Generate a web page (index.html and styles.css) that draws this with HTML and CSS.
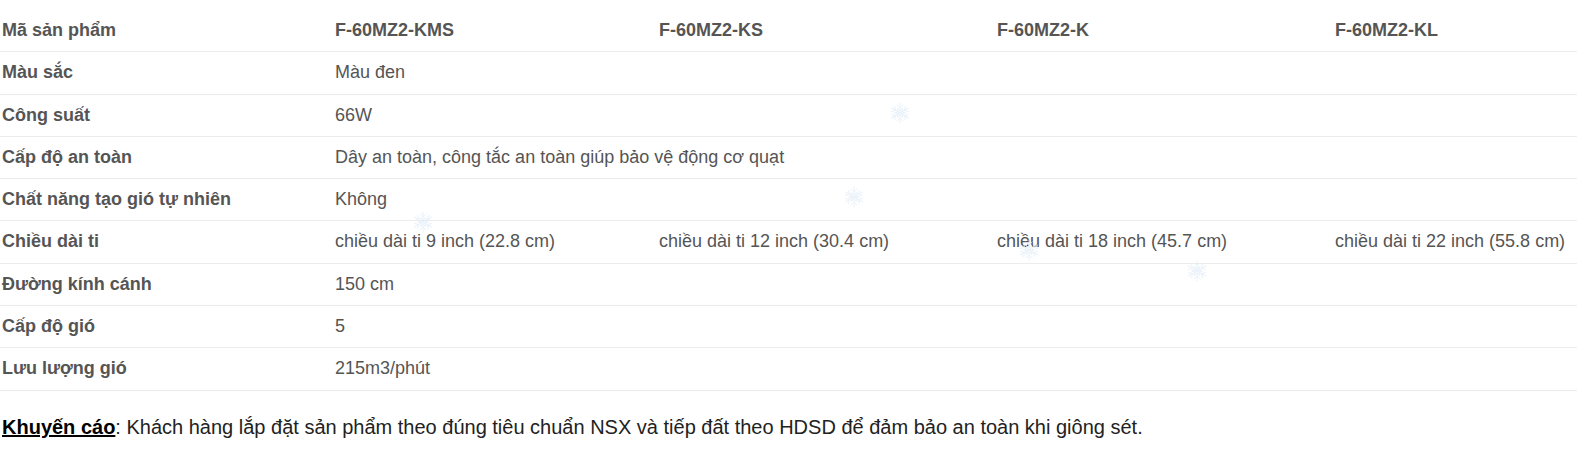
FILE: index.html
```html
<!DOCTYPE html>
<html lang="vi">
<head>
    <meta charset="UTF-8">
    <meta name="viewport" content="width=device-width, initial-scale=1.0">
    <title>Thông số kỹ thuật</title>
    <link rel="stylesheet" href="styles.css">
</head>
<body>
    <!-- Bảng thông số -->
    <table class="spec-table">
        <colgroup>
            <col class="col-label">
            <col class="col-a">
            <col class="col-b">
            <col class="col-c">
            <col>
        </colgroup>
        <tr class="head-row">
            <td class="label">Mã sản phẩm</td>
            <td>F-60MZ2-KMS</td>
            <td>F-60MZ2-KS</td>
            <td>F-60MZ2-K</td>
            <td>F-60MZ2-KL</td>
        </tr>
        <tr>
            <td class="label">Màu sắc</td>
            <td colspan="4">Màu đen</td>
        </tr>
        <tr>
            <td class="label">Công suất</td>
            <td colspan="4">66W</td>
        </tr>
        <tr>
            <td class="label">Cấp độ an toàn</td>
            <td colspan="4">Dây an toàn, công tắc an toàn giúp bảo vệ động cơ quạt</td>
        </tr>
        <tr>
            <td class="label">Chất năng tạo gió tự nhiên</td>
            <td colspan="4">Không</td>
        </tr>
        <tr>
            <td class="label">Chiều dài ti</td>
            <td>chiều dài ti 9 inch (22.8 cm)</td>
            <td>chiều dài ti 12 inch (30.4 cm)</td>
            <td>chiều dài ti 18 inch (45.7 cm)</td>
            <td>chiều dài ti 22 inch (55.8 cm)</td>
        </tr>
        <tr>
            <td class="label">Đường kính cánh</td>
            <td colspan="4">150 cm</td>
        </tr>
        <tr>
            <td class="label">Cấp độ gió</td>
            <td colspan="4">5</td>
        </tr>
        <tr>
            <td class="label">Lưu lượng gió</td>
            <td colspan="4">215m3/phút</td>
        </tr>
    </table>

    <p class="note"><u><b>Khuyến cáo</b></u>: Khách hàng lắp đặt sản phẩm theo đúng tiêu chuẩn NSX và tiếp đất theo HDSD để đảm bảo an toàn khi giông sét.</p>

    <!-- Tuyết rơi trang trí -->
    <svg width="0" height="0" class="defs">
        <defs>
            <g id="flake">
                <g id="arm">
                    <line x1="11" y1="11" x2="11" y2="1"/>
                    <polyline points="8,3 11,6 14,3"/>
                    <polyline points="8.5,6.5 11,9 13.5,6.5"/>
                </g>
                <use href="#arm" transform="rotate(60 11 11)"/>
                <use href="#arm" transform="rotate(120 11 11)"/>
                <use href="#arm" transform="rotate(180 11 11)"/>
                <use href="#arm" transform="rotate(240 11 11)"/>
                <use href="#arm" transform="rotate(300 11 11)"/>
            </g>
        </defs>
    </svg>
    <div class="snow">
        <svg class="flake" style="left: 889px; top: 102px;" viewBox="0 0 22 22"><use href="#flake"/></svg>
        <svg class="flake" style="left: 843px; top: 186px;" viewBox="0 0 22 22"><use href="#flake"/></svg>
        <svg class="flake" style="left: 412px; top: 211px;" viewBox="0 0 22 22"><use href="#flake"/></svg>
        <svg class="flake" style="left: 1018px; top: 239px;" viewBox="0 0 22 22"><use href="#flake"/></svg>
        <svg class="flake" style="left: 1186px; top: 260px;" viewBox="0 0 22 22"><use href="#flake"/></svg>
    </div>
</body>
</html>
```

FILE: styles.css
```css
body {
    margin: 0;
    padding: 0;
    background: #fff;
    font-family: "Liberation Sans", Arial, sans-serif;
    font-size: 18px;
    color: #555;
}
.spec-table {
    width: 100%;
    margin-top: 10px;
    border-collapse: collapse;
    table-layout: fixed;
}
.col-label {
    width: 333px;
}
.col-a {
    width: 324px;
}
.col-b {
    width: 338px;
}
.col-c {
    width: 338px;
}
.spec-table td {
    padding: 8px 0 8px 2px;
    line-height: 25.3px;
    border-bottom: 1px solid #ececec;
    vertical-align: middle;
    white-space: nowrap;
}
.spec-table td.label,
.head-row td {
    font-weight: bold;
}
.note {
    margin: 25px 0 0 2px;
    font-size: 20px;
    color: #222;
}
.note u {
    color: #000;
}
.defs {
    position: absolute;
}
.snow {
    position: absolute;
    top: 0;
    left: 0;
}
.flake {
    position: absolute;
    width: 22px;
    height: 22px;
    fill: none;
    stroke: #e4eef9;
    stroke-width: 1;
    stroke-linecap: round;
    opacity: 0.75;
}
```
